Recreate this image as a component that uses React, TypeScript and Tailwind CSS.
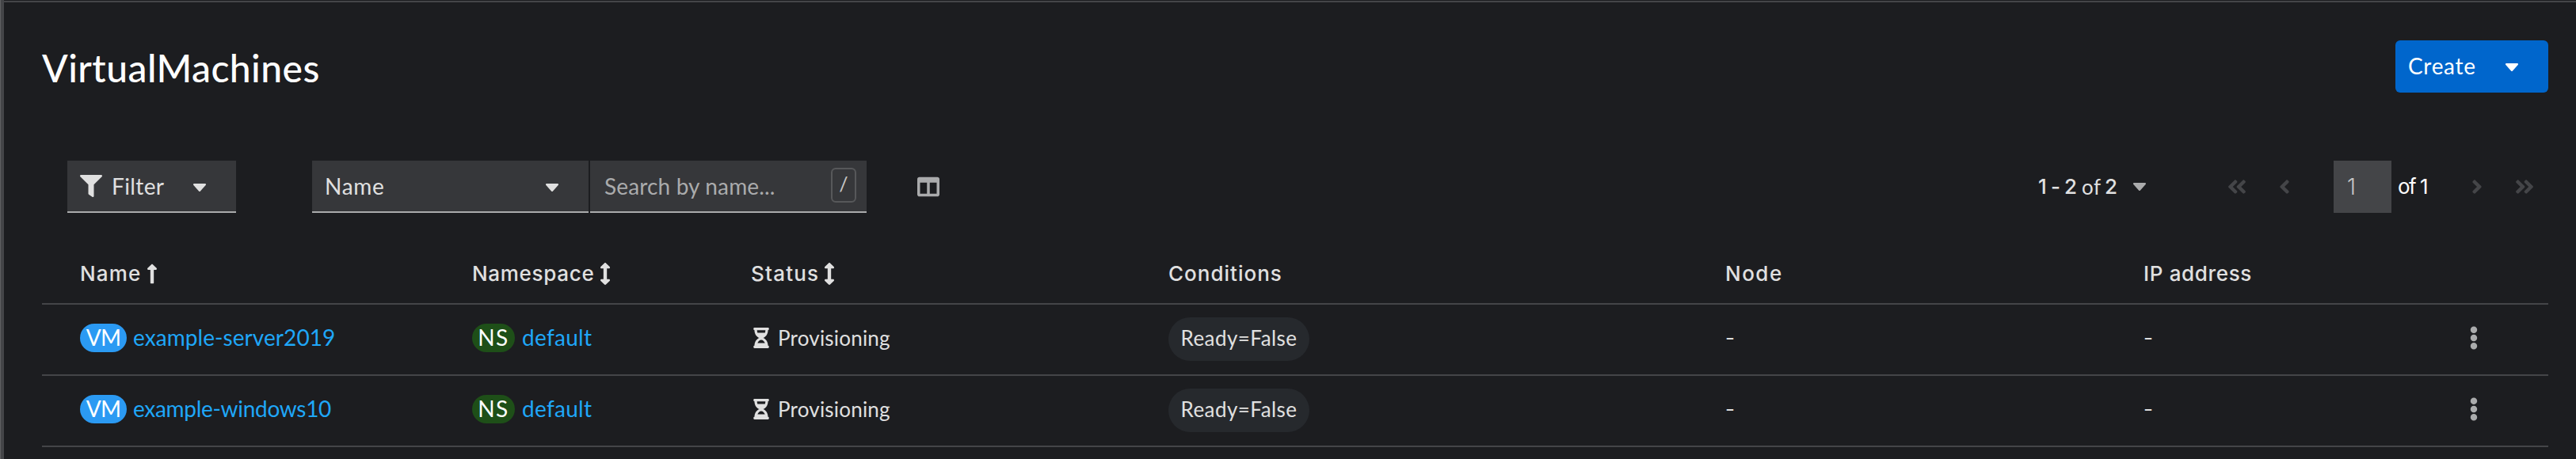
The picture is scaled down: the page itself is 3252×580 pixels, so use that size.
import type { ReactNode } from "react";
import {
  FaAngleDoubleLeft,
  FaAngleDoubleRight,
  FaAngleLeft,
  FaAngleRight,
  FaArrowsAltV,
  FaColumns,
  FaEllipsisV,
  FaFilter,
  FaHourglassHalf,
  FaLongArrowAltUp,
} from "react-icons/fa";

function Caret({ className = "" }: { className?: string }) {
  return (
    <svg viewBox="11 192 298 169" preserveAspectRatio="none" className={`h-[10px] w-4 shrink-0 fill-current ${className}`}>
      <path d="M31.3 192h257.3c17.8 0 26.7 21.5 14.1 34.1L174.1 354.8c-7.8 7.8-20.5 7.8-28.3 0L17.2 226.1C4.6 213.5 13.5 192 31.3 192z" />
    </svg>
  );
}

function Header({ label, tracking, width, icon }: { label: string; tracking: string; width: string; icon?: ReactNode }) {
  return (
    <div className="flex items-center whitespace-nowrap font-['Inter',sans-serif] text-[26px] leading-9 font-medium text-[#e0e0e0]">
      <span className={`${tracking} ${width}`}>{label}</span>
      {icon}
    </div>
  );
}

const columns = "grid grid-cols-[495px_352px_527px_703px_528px_1fr] pl-12 border-b-2 border-[#444548]";

const machines = [
  { name: "example-server2019", tracking: "tracking-[0.07px]" },
  { name: "example-windows10", tracking: "tracking-[-0.3px]" },
];

function Row({ name, tracking }: { name: string; tracking: string }) {
  return (
    <div className={`${columns} h-[90px] items-center pb-1 text-[28px] leading-9`}>
      <div className="flex items-center whitespace-nowrap">
        <span className="flex h-9 w-[59px] items-center justify-center rounded-full bg-[#2b9af3] pb-0.5 tracking-[-0.8px] text-white">VM</span>
        <a className={`ml-2 pb-0.5 text-[#1fa7f8] ${tracking}`}>{name}</a>
      </div>
      <div className="flex items-center whitespace-nowrap">
        <span className="flex h-9 w-[54px] items-center justify-center rounded-full bg-[#1e4f18] pb-0.5 tracking-[1.5px] text-white">NS</span>
        <a className="ml-[9px] pb-0.5 tracking-[0.3px] text-[#1fa7f8]">default</a>
      </div>
      <div className="flex items-center text-[26px] whitespace-nowrap text-[#e0e0e0]">
        <FaHourglassHalf className="h-[26px] w-[26px]" />
        <span className="ml-2 tracking-[0.2px]">Provisioning</span>
      </div>
      <div className="flex text-[26px] whitespace-nowrap text-[#e0e0e0]">
        <span className="mt-[3px] flex h-[55px] w-[178px] items-center justify-center rounded-full bg-[#26292d] pb-[3px] tracking-[0.45px]">Ready=False</span>
      </div>
      <div className="font-['Inter',sans-serif] text-[26px] text-[#e0e0e0]">-</div>
      <div className="flex items-center justify-between pr-[79px] text-[26px] text-[#e0e0e0]">
        <span className="font-['Inter',sans-serif]">-</span>
        <FaEllipsisV className="h-[30px] w-[30px] text-[#aaabac]" />
      </div>
    </div>
  );
}

export default function App() {
  return (
    <div className="flex h-[580px] w-[3252px] overflow-hidden bg-[#1c1d20] font-['Lato',sans-serif]">
      <div className="w-[5px] shrink-0 border-l border-[#5e5f61] bg-[#444548]" />
      <div className="flex grow flex-col pt-px">
        <div className="h-0.5 shrink-0 bg-[#444548]" />
        <div className="flex flex-col pr-[35px] pl-12">
          <header className="mt-12 flex h-[66px] items-center justify-between">
            <h1 className="pt-[3px] text-[48px] leading-[60px] font-medium tracking-[0.45px] text-white">VirtualMachines</h1>
            <button className="flex h-[66px] w-[193px] items-center rounded-md bg-[#0066cc] pl-4 text-[28px] text-white">
              <span className="w-[123px] pb-0.5 text-left tracking-[0.7px]">Create</span>
              <Caret className="mt-0.5" />
            </button>
          </header>

          <div className="mt-[86px] flex h-[66px] items-center pl-8 text-[28px] text-[#e0e0e0]">
            <button className="flex h-[66px] w-[213px] items-center border-b-2 border-[#aaabac] bg-[#36373a] pl-4">
              <FaFilter className="h-7 w-7" />
              <span className="ml-3 w-[103px] text-left tracking-[0.4px]">Filter</span>
              <Caret className="mt-1" />
            </button>
            <button className="ml-24 flex h-[66px] w-[349px] items-center border-b-2 border-[#aaabac] bg-[#36373a] pl-4">
              <span className="w-[279px] text-left tracking-[0.7px]">Name</span>
              <Caret className="mt-1" />
            </button>
            <div className="ml-0.5 flex h-[66px] w-[349px] items-center border-b-2 border-[#aaabac] bg-[#36373a] pl-[18px] text-[#aaabac]">
              <span className="w-[286px] whitespace-nowrap tracking-[0.15px]">Search by name...</span>
              <kbd className="mb-0.5 flex h-11 w-8 items-center justify-center rounded-md border-2 border-[#57585a] pb-0.5 font-['Lato',sans-serif] text-[25px] text-[#c7c7c7]">/</kbd>
            </div>
            <FaColumns className="ml-16 h-7 w-7 text-[#aaabac]" />

            <div className="ml-auto flex w-[644px] items-center font-['Inter',sans-serif] text-[26px] leading-9 whitespace-nowrap">
              <span className="w-[55px] pb-px font-medium tracking-[-0.9px]">1 - 2</span>
              <span className="w-[29px] pb-px font-['Lato',sans-serif] tracking-[0.5px]">of</span>
              <span className="w-[36px] pb-px font-medium">2</span>
              <Caret className="text-[#aaabac]" />
              <FaAngleDoubleLeft className="ml-[101px] h-7 w-7 text-[#444548]" />
              <FaAngleLeft className="ml-8 h-7 w-7 text-[#444548]" />
              <span className="ml-12 flex h-[66px] w-[73px] items-center bg-[#444548] pl-[17px] text-[28px] font-light text-[#c7c7c7]">1</span>
              <span className="ml-2 w-[86px] pb-px tracking-[-1.5px] text-white">of 1</span>
              <FaAngleRight className="h-7 w-7 text-[#444548]" />
              <FaAngleDoubleRight className="ml-8 h-7 w-7 text-[#444548]" />
            </div>
          </div>

          <div className="mt-[26px]">
            <div className={`${columns} h-[90px] items-center pt-[14px]`}>
              <Header label="Name" tracking="tracking-[1.2px]" width="w-[77px]" icon={<FaLongArrowAltUp className="h-7 w-7" />} />
              <Header label="Namespace" tracking="tracking-[0.7px]" width="w-[154px]" icon={<FaArrowsAltV className="h-7 w-7" />} />
              <Header label="Status" tracking="tracking-[1.2px]" width="w-[85px]" icon={<FaArrowsAltV className="h-7 w-7" />} />
              <Header label="Conditions" tracking="tracking-[1px]" width="w-[150px]" />
              <Header label="Node" tracking="tracking-[1.5px]" width="w-[80px]" />
              <Header label="IP address" tracking="tracking-[0.65px]" width="w-[150px]" />
            </div>
            {machines.map((m) => (
              <Row key={m.name} {...m} />
            ))}
          </div>
        </div>
      </div>
    </div>
  );
}
